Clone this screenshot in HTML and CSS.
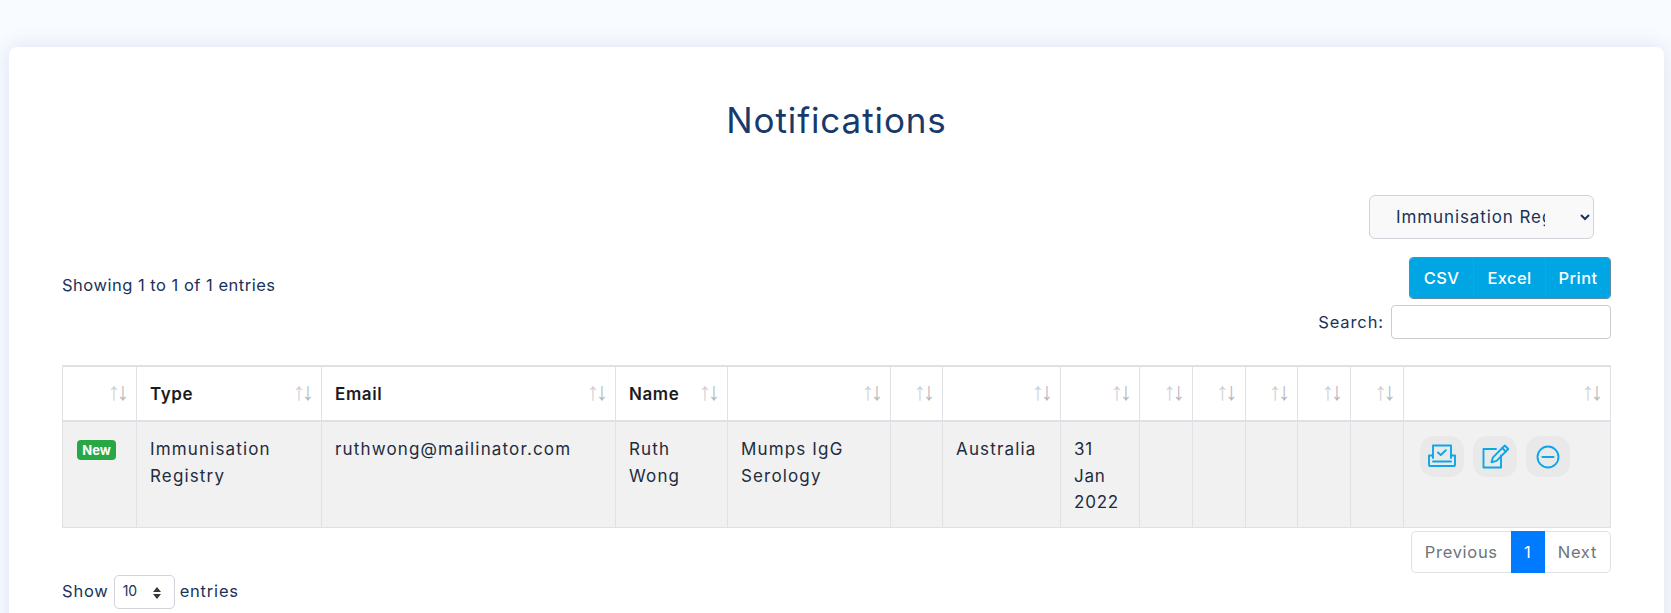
FILE: index.html
```html
<!DOCTYPE html>
<html lang="en">
<head>
<meta charset="utf-8">
<title>Notifications</title>
<link rel="stylesheet" href="styles.css">
</head>
<body>
<main class="card">
  <h1 class="title">Notifications</h1>
  <div class="filter-row">
    <select class="filter"><option>Immunisation Registry</option></select>
  </div>
  <div class="controls">
    <div class="info">Showing 1 to 1 of 1 entries</div>
    <div class="controls-right">
      <div class="btn-group">
        <button class="btn">CSV</button><button class="btn">Excel</button><button class="btn">Print</button>
      </div>
      <label class="search">Search: <input class="search-input" type="search"></label>
    </div>
  </div>
  <table class="table">
    <colgroup>
      <col class="c1"><col class="c2"><col class="c3"><col class="c4"><col class="c5"><col class="c6"><col class="c7"><col class="c8"><col class="c9"><col class="c9"><col class="c9"><col class="c9"><col class="c9"><col>
    </colgroup>
    <thead>
      <tr>
        <th></th><th>Type</th><th>Email</th><th>Name</th><th></th><th></th><th></th><th></th><th></th><th></th><th></th><th></th><th></th><th></th>
      </tr>
    </thead>
    <tbody>
      <tr>
        <td class="badge-cell"><span class="badge">New</span></td>
        <td>Immunisation Registry</td>
        <td>ruthwong@mailinator.com</td>
        <td>Ruth Wong</td>
        <td>Mumps IgG Serology</td>
        <td></td>
        <td>Australia</td>
        <td class="date">31 Jan 2022</td>
        <td></td><td></td><td></td><td></td><td></td>
        <td class="actions">
          <div class="action-list">
          <a class="action" href="#" aria-label="Approve">
            <svg viewBox="0 0 32 32" width="32" height="32" fill="none" stroke="currentColor" stroke-width="1.9" stroke-linejoin="round" stroke-linecap="round"><path d="M7 17V4.500h18V17"/><path d="M7 14.500H3v9.500a1 1 0 0 0 1 1h24a1 1 0 0 0 1-1v-9.500h-4"/><path d="M7 20.500h18"/><path d="M12 11.500l2.800 2.500 5-4.800"/></svg>
          </a>
          <a class="action" href="#" aria-label="Edit">
            <svg viewBox="0 0 32 32" width="32" height="32" fill="none" stroke="currentColor" stroke-width="1.9" stroke-linejoin="round" stroke-linecap="round"><path d="M17 8H4.500v18.500h17.500V14.500"/><path d="M25.800 4.500l3.500 3.500-11.800 11.800-5 1.500 1.500-5z"/><path d="M23.300 7l3.500 3.500"/></svg>
          </a>
          <a class="action" href="#" aria-label="Remove">
            <svg viewBox="0 0 32 32" width="32" height="32" fill="none" stroke="currentColor" stroke-linecap="round"><circle cx="16" cy="16" r="10.500" stroke-width="1.900"/><path d="M10.500 16h11" stroke-width="2.200"/></svg>
          </a>
          </div>
        </td>
      </tr>
    </tbody>
  </table>
  <div class="pager-row">
    <ul class="pager">
      <li class="page">Previous</li><li class="page active">1</li><li class="page">Next</li>
    </ul>
  </div>
  <div class="length">Show <span class="length-wrap"><select class="length-select"><option>10</option></select></span> entries</div>
</main>
</body>
</html>
```
FILE: styles.css
```css
* { box-sizing: border-box; }
html, body { height: 613px; overflow: hidden; }
body {
  margin: 0;
  padding: 47px 7px 0 9px;
  background: #f8fbff;
  font-family: Inter, "Noto Sans", sans-serif;
  font-size: 17px;
  line-height: 26.6px;
  color: #1a3358;
  letter-spacing: 1.150px;
}
.card {
  height: 700px;
  padding: 0 53px;
  background: #fff;
  border-radius: 8px;
  box-shadow: 0 0 20px rgba(90, 110, 170, .18);
}
.title {
  margin: 0;
  padding-top: 49px;
  height: 148px;
  text-align: center;
  font-size: 35px;
  font-weight: 400;
  line-height: 48px;
  letter-spacing: .9px;
  color: #183a6b;
}
.filter-row { display: flex; justify-content: flex-end; padding-right: 17px; }
.filter {
  width: 225px;
  height: 44px;
  padding: 0 32px 0 22px;
  border: 1px solid #ced4da;
  border-radius: 6px;
  background: #f9f9fa;
  font: inherit;
  letter-spacing: .9px;
  color: #1a3358;
}
.controls { display: flex; justify-content: space-between; align-items: flex-start; margin-top: 18px; }
.info { margin-top: 15px; font-size: 16.500px; letter-spacing: .5px; }
.controls-right { display: flex; flex-direction: column; align-items: flex-end; gap: 6px; }
.btn-group { display: flex; height: 42px; border-radius: 4px; overflow: hidden; border: 1px solid #5f8ba5; }
.btn {
  border: 0;
  border-left: 1px solid #5f8ba5;
  padding: 0 13.500px;
  background: #00a5e3;
  color: #fff;
  font: inherit;
  font-size: 16.500px;
  font-weight: 500;
  letter-spacing: .4px;
}
.btn:first-child { border-left: 0; padding: 0 13.500px; }
.btn:last-child { padding: 0 12.500px; }
.search { display: flex; align-items: center; gap: 7px; font-size: 16.500px; letter-spacing: .9px; }
.search-input { width: 220px; height: 34px; border: 1px solid #ccc; border-radius: 4px; background: #fff; }
.table {
  width: 100%;
  margin-top: 26px;
  border-collapse: collapse;
  table-layout: fixed;
  border: 1px solid #dee2e6;
}
.c1 { width: 74px; }
.c2 { width: 185px; }
.c3 { width: 294px; }
.c4 { width: 112px; }
.c5 { width: 163px; }
.c6 { width: 52px; }
.c7 { width: 118px; }
.c8 { width: 79px; }
.c9 { width: 52.750px; }
.table th, .table td { border: 1px solid #dee2e6; vertical-align: top; padding: 14px 13px 0; text-align: left; }
.table th {
  position: relative;
  height: 55px;
  border-top-width: 2px;
  border-bottom-width: 2px;
  color: #1b1b1f;
  font-weight: 600;
  letter-spacing: .6px;
  padding-top: 14px;
}
.table th::before, .table th::after {
  position: absolute;
  top: 11px;
  font-family: "Liberation Sans", sans-serif;
  font-weight: 400;
  font-size: 25px;
  letter-spacing: 0;
  color: #b4b8bd;
}
.table th::before { content: "\2191"; right: 16px; opacity: .65; }
.table th::after { content: "\2193"; right: 7px; }
.table td { height: 106px; background: #f1f1f1; color: #1f2c40; }
.table .date { padding-right: 20px; letter-spacing: .8px; }
.table .badge-cell { padding: 18px 14px 0; }
.badge {
  display: block;
  width: 39px;
  height: 20px;
  border-radius: 4px;
  background: #28a745;
  color: #fff;
  font-size: 13px;
  font-weight: 700;
  line-height: 20px;
  letter-spacing: 0;
  text-align: center;
}
.table .actions { padding: 14px 0 0 16px; }
.action-list { display: flex; gap: 9px; }
.action {
  display: flex;
  align-items: center;
  justify-content: center;
  width: 44px;
  height: 41px;
  border-radius: 14px;
  background: #e9e9e9;
  color: #0da6ea;
}
.pager-row { display: flex; justify-content: flex-end; margin-top: 3px; }
.pager { display: flex; height: 42px; margin: 0; padding: 0; list-style: none; border: 1px solid #dee2e6; border-radius: 5px; color: #6c757d; font-size: 16.500px; letter-spacing: .7px; }
.page { padding: 0 13px; line-height: 40px; }
.page.active { margin: -1px 0; width: 34px; padding: 0; text-align: center; line-height: 42px; background: #007bff; color: #fff; }
.length { display: flex; align-items: center; gap: 5px; margin-top: 2px; height: 34px; font-size: 16.500px; letter-spacing: .8px; }
.length-wrap { position: relative; display: block; width: 61px; height: 34px; }
.length-wrap::before, .length-wrap::after {
  content: "";
  position: absolute;
  right: 14px;
  border-left: 4.500px solid transparent;
  border-right: 4.500px solid transparent;
  pointer-events: none;
}
.length-wrap::before { top: 12px; border-bottom: 5px solid #343a40; }
.length-wrap::after { top: 19px; border-top: 5px solid #343a40; }
.length-select { appearance: none; display: block; width: 100%; height: 34px; padding: 0 8px; border: 1px solid #ced4da; border-radius: 5px; background: #fff; font: inherit; font-size: 14px; letter-spacing: 0; color: #1a3358; }
```
